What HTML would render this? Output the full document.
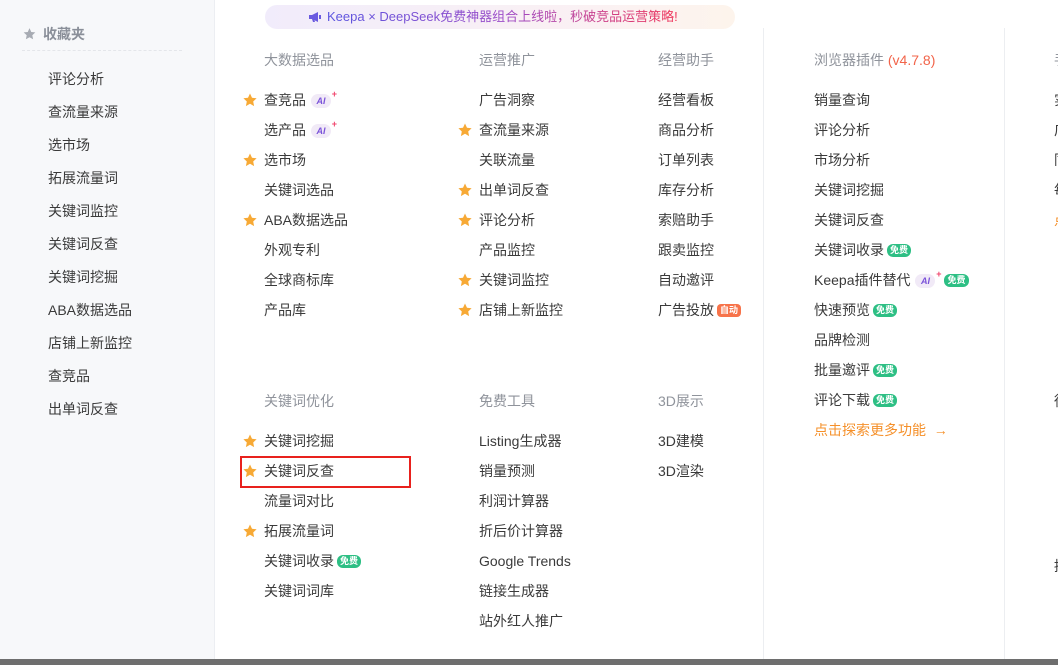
<!DOCTYPE html>
<html><head><meta charset="utf-8"><style>
*{margin:0;padding:0;box-sizing:border-box}
body{width:1058px;height:665px;overflow:hidden;background:#fff;font-family:"Liberation Sans","Noto Sans CJK SC",sans-serif;font-size:14px;color:#3a3a3a;position:relative}
.side{position:absolute;left:0;top:0;width:215px;height:659px;background:#f7f8fa;border-right:1px solid #eceef2}
.side .h{position:absolute;left:22px;top:24px;color:#8a8f99;font-size:14px;font-weight:bold}
.side .h svg{vertical-align:-2px;margin-right:6px}
.side .line{position:absolute;left:22px;top:50px;width:160px;border-top:1px dashed #e4e6ea}
.si{position:absolute;left:48px}
.t{position:absolute;white-space:nowrap;line-height:20px}
.hd{color:#8f939b}
.st{position:absolute}
.ai{display:inline-block;width:20px;height:14px;border-radius:7px;background:#f1eaf7;font-size:9px;font-style:italic;font-weight:bold;color:#7a52d9;text-align:center;line-height:14px;vertical-align:1px;margin-left:5px;position:relative}
.ai:after{content:"+";position:absolute;right:-6px;top:-7px;color:#f0436b;font-size:9px;font-style:normal}
.free{display:inline-block;padding:0 3px;height:13px;border-radius:6px;background:#2dbf84;color:#fff;font-size:9px;line-height:13px;vertical-align:2px;margin-left:3px;font-weight:bold}
.auto{display:inline-block;padding:0 3px;height:13px;border-radius:4px;background:#f7734a;color:#fff;font-size:9px;line-height:13px;vertical-align:2px;margin-left:3px;font-weight:bold}
.vl{position:absolute;top:28px;height:631px;border-left:1px solid #eceef1}
.banner{position:absolute;left:265px;top:5px;width:470px;height:24px;border-radius:12px;background:linear-gradient(90deg,#f1ecfb,#fbf1f3 70%,#fdf4ec);font-size:13px;line-height:24px;padding-left:62px}
.banner span{background:linear-gradient(90deg,#5a55e0,#9b4bc8 50%,#f0365a);-webkit-background-clip:text;background-clip:text;color:transparent}
.bottom{position:absolute;left:0;top:659px;width:1058px;height:6px;background:#6e6e6e}
.red{position:absolute;left:240px;top:456px;width:171px;height:32px;border:2px solid #e8211d}
</style></head><body>
<div class="side">
<div class="h"><svg width="15" height="14" viewBox="0 0 24 24"><path fill="#a7abb3" d="M12 2l3 6.5 7 .8-5.2 4.8 1.4 7L12 17.6 5.8 21.1l1.4-7L2 9.3l7-.8z"/></svg>收藏夹</div>
<div class="line"></div>
<div class="t si" style="top:69px">评论分析</div>
<div class="t si" style="top:102px">查流量来源</div>
<div class="t si" style="top:135px">选市场</div>
<div class="t si" style="top:168px">拓展流量词</div>
<div class="t si" style="top:201px">关键词监控</div>
<div class="t si" style="top:234px">关键词反查</div>
<div class="t si" style="top:267px">关键词挖掘</div>
<div class="t si" style="top:300px">ABA数据选品</div>
<div class="t si" style="top:333px">店铺上新监控</div>
<div class="t si" style="top:366px">查竞品</div>
<div class="t si" style="top:399px">出单词反查</div>
</div>
<div class="banner"><svg style="position:absolute;left:43px;top:6px" width="14" height="12" viewBox="0 0 14 12"><path fill="#6a5ae0" d="M1 4h3l6-3v10L4 8H1z"/><path fill="#6a5ae0" d="M4 8l1 3h2l-1-3z"/><rect x="11" y="4" width="2" height="4" fill="#6a5ae0"/></svg><span>Keepa × DeepSeek免费神器组合上线啦，秒破竞品运营策略!</span></div>
<div class="vl" style="left:763px"></div>
<div class="vl" style="left:1004px"></div>
<svg width="0" height="0" style="position:absolute"><defs><path id="s" d="M7 0.5l2 4.2 4.6.6-3.4 3.2.9 4.6L7 10.8 2.9 13.1l.9-4.6L.4 5.3 5 4.7z" fill="#f7a935"/></defs></svg>
<div id="m"></div>
<div class="red"></div>
<div class="bottom"></div>
<script>
var out='';function T(x,y,s,c){out+='<div class="t'+(c?' '+c:'')+'" style="left:'+x+'px;top:'+y+'px">'+s+'</div>'}
function S(x,y){out+='<svg class="st" style="left:'+x+'px;top:'+(y+3)+'px" width="14" height="14"><use href="#s"/></svg>'}
var AI='<span class="ai">AI</span>',F='<span class="free">免费</span>';
function col(x,sx,y0,head,items){T(x,y0-50,head,'hd');items.forEach(function(it,i){var y=y0+i*30-10;if(it[1])S(sx,y);T(x,y,it[0])})}
col(264,243,100,'大数据选品',[['查竞品'+AI,1],['选产品'+AI],['选市场',1],['关键词选品'],['ABA数据选品',1],['外观专利'],['全球商标库'],['产品库']]);
col(479,458,100,'运营推广',[['广告洞察'],['查流量来源',1],['关联流量'],['出单词反查',1],['评论分析',1],['产品监控'],['关键词监控',1],['店铺上新监控',1]]);
col(658,0,100,'经营助手',[['经营看板'],['商品分析'],['订单列表'],['库存分析'],['索赔助手'],['跟卖监控'],['自动邀评'],['广告投放<span class="auto">自动</span>']]);
col(814,0,100,'浏览器插件 <span style="color:#f2644a">(v4.7.8)</span>',[['销量查询'],['评论分析'],['市场分析'],['关键词挖掘'],['关键词反查'],['关键词收录'+F],['Keepa插件替代'+AI+'<span style="margin-left:6px"></span>'+F],['快速预览'+F],['品牌检测'],['批量邀评'+F],['评论下载'+F],['<span style="color:#f5902a">点击探索更多功能 &nbsp;→</span>']]);
col(264,243,441,'关键词优化',[['关键词挖掘',1],['关键词反查',1],['流量词对比'],['拓展流量词',1],['关键词收录'+F],['关键词词库']]);
col(479,0,441,'免费工具',[['Listing生成器'],['销量预测'],['利润计算器'],['折后价计算器'],['Google Trends'],['链接生成器'],['站外红人推广']]);
col(658,0,441,'3D展示',[['3D建模'],['3D渲染']]);
col(1054,0,100,'<span>手</span>',[['实'],['广'],['同'],['每'],['<span style="color:#f5902a">点</span>']]);
T(1054,391,'徒');T(1054,556,'拼');
document.getElementById('m').innerHTML=out;
</script>
</body></html>
